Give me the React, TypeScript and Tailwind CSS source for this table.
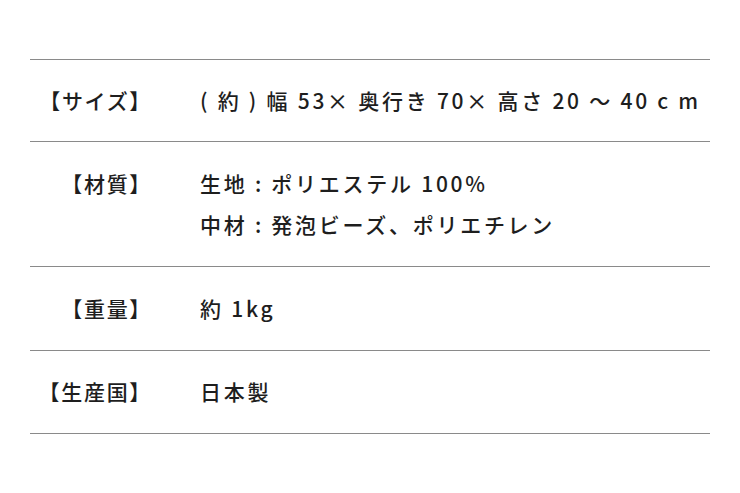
const rows: { label: string; values: string[] }[] = [
  { label: '【サイズ】', values: ['( 約 ) 幅 53× 奥行き 70× 高さ 20 ～ 40 c m'] },
  { label: '【材質】', values: ['生地 : ポリエステル 100%', '中材 : 発泡ビーズ、ポリエチレン'] },
  { label: '【重量】', values: ['約 1kg'] },
  { label: '【生産国】', values: ['日本製'] },
];

const App = () => {
  return (
    <div
      className="h-[493px] w-[740px] bg-white pt-[59px] text-[#1e1e1e]"
      style={{ fontFamily: '"Noto Sans CJK JP", "Noto Sans", sans-serif' }}
    >
      <div className="mx-[30px] border-b border-[#8a8a8a]">
        {rows.map((row) => (
          <div key={row.label} className="flex border-t border-[#8a8a8a] py-[20px] [&:nth-child(2)]:py-[21px] [&:nth-child(3)]:py-[21px] [&:nth-child(4)]:pb-[21px]">
            <div className="w-[122px] shrink-0 text-right text-[21px] font-medium leading-[41px] tracking-[0.08em]">
              {row.label}
            </div>
            <div className="pl-[48px]">
              {row.values.map((v) => (
                <p key={v} className="text-[21px] font-medium leading-[41px] tracking-[0.13em]">
                  {v}
                </p>
              ))}
            </div>
          </div>
        ))}
      </div>
    </div>
  );
};

export default App;
